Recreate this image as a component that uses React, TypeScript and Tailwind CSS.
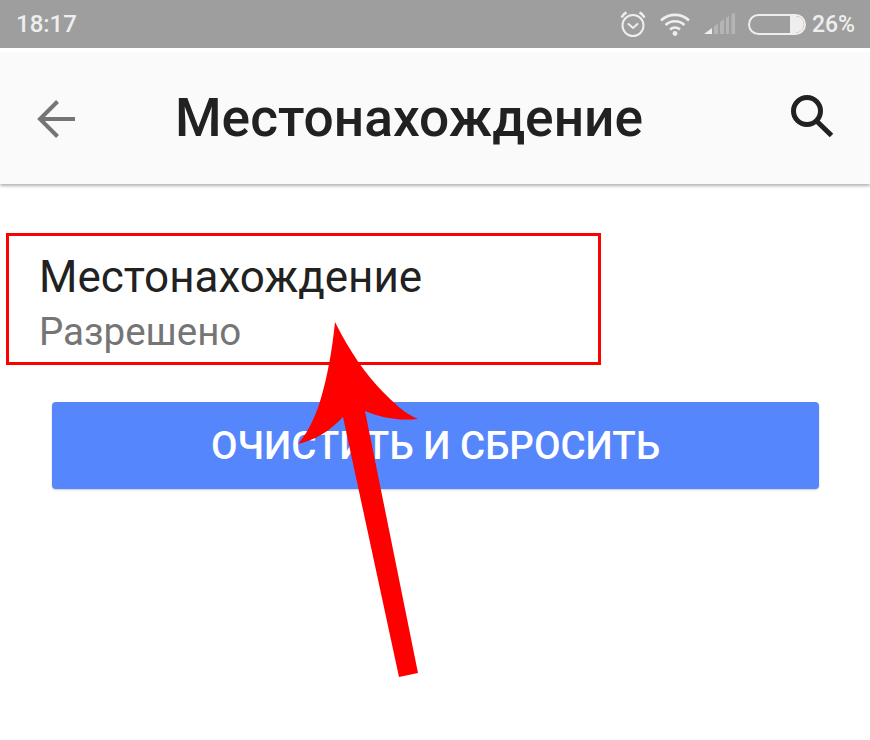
function BackIcon() {
  return (
    <svg width="40" height="40" viewBox="0 0 40 40" fill="none" stroke="#757575" strokeWidth="4">
      <path d="M39 20H4" />
      <path d="M21.5 2.5L4 20L21.5 37.5" />
    </svg>
  );
}

function AlarmIcon() {
  return (
    <svg width="28" height="28" viewBox="0 0 28 28" fill="none" stroke="#eeeeee" strokeWidth="2">
      <circle cx="14" cy="15.5" r="10.5" />
      <path d="M9.5 14l4.5 4 4.5-4" strokeLinecap="round" />
      <path d="M2.5 7.5C3.5 5 5 3.5 7.5 2.5M25.5 7.5C24.5 5 23 3.5 20.5 2.5" strokeWidth="2.5" />
    </svg>
  );
}

function WifiIcon() {
  return (
    <svg width="32" height="24" viewBox="0 0 32 24" fill="none" stroke="#eeeeee" strokeWidth="2.6">
      <path d="M2 8.5C10 1 22 1 30 8.5" />
      <path d="M6.5 13C12 8 20 8 25.5 13" />
      <path d="M11 17.5C14 15 18 15 21 17.5" />
      <circle cx="16" cy="21.5" r="2.4" fill="#eeeeee" stroke="none" />
    </svg>
  );
}

function SignalIcon() {
  return (
    <svg width="32" height="22" viewBox="0 0 32 22">
      <path d="M0 21L8 15V21Z" fill="#eeeeee" />
      <path d="M10 13.5L14 10.5V21H10ZM16 9L20 6V21H16ZM22 5L25 3V21H22ZM27.5 1L31 0V21H27.5Z" fill="#b5b5b5" />
    </svg>
  );
}

function Battery() {
  return (
    <div className="flex h-[21px] w-[58px] justify-end overflow-hidden rounded-full border-2 border-[#eeeeee]">
      <div className="h-full w-[14px] rounded-r-full bg-[#eeeeee]" />
    </div>
  );
}

function SearchIcon() {
  return (
    <svg width="44" height="48" viewBox="0 0 44 48" fill="none" stroke="#212121" strokeWidth="5">
      <circle cx="17" cy="16" r="13.5" />
      <path d="M26 25.5L41.5 40.5" />
    </svg>
  );
}

function RedArrow() {
  return (
    <svg
      className="pointer-events-none absolute left-[290px] top-[315px]"
      width="140"
      height="370"
      viewBox="290 315 140 370"
    >
      <path
        d="M335 322C350 352 366 375 383 392C393 402 405 414 418 419C400 421 382 418 365 411L418 673L399 677L343 417C330 431 315 440 298 444C310 430 317 412 321 398C327 378 332 352 335 322Z"
        fill="#ff0000"
      />
    </svg>
  );
}

export default function App() {
  return (
    <div className="relative h-[740px] w-[870px] overflow-hidden bg-white font-['Roboto',sans-serif]">
      {/* статус-бар */}
      <div className="flex h-[48px] items-center justify-between bg-[#9e9e9e] pl-[16px] pr-[15px] text-[#eeeeee]">
        <span className="text-[24px] font-medium leading-none">18:17</span>
        <div className="flex items-center">
          <AlarmIcon />
          <div className="ml-[12px]">
            <WifiIcon />
          </div>
          <div className="ml-[13px]">
            <SignalIcon />
          </div>
          <div className="ml-[12px]">
            <Battery />
          </div>
          <span className="ml-[6px] text-[23px] font-medium leading-none">26%</span>
        </div>
      </div>

      {/* тулбар */}
      <div className="mt-[5px] flex h-[131px] items-center bg-[#fafafa] pl-[36px] pr-[36px] shadow-[0_2px_3px_rgba(0,0,0,0.3)]">
        <BackIcon />
        <h1 className="ml-[99px] text-[53.3px] font-medium leading-none text-[#212121]">Местонахождение</h1>
        <div className="ml-auto">
          <SearchIcon />
        </div>
      </div>

      {/* пункт в красной рамке */}
      <div className="ml-[6px] mt-[49px] h-[132px] w-[595px] border-[3px] border-[#ff0000] pl-[30px] pt-[13px]">
        <div className="text-[44px] leading-[56px] text-[#212121]">Местонахождение</div>
        <div className="mt-[3px] text-[38.5px] leading-[48px] text-[#757575]">Разрешено</div>
      </div>

      <button className="ml-[52px] mt-[37px] flex h-[87px] w-[767px] items-center justify-center rounded-[4px] bg-[#5586fb] text-[38.5px] font-medium text-white shadow-[0_1px_2px_rgba(0,0,0,0.2)]">
        ОЧИСТИТЬ И СБРОСИТЬ
      </button>

      <RedArrow />
    </div>
  );
}
